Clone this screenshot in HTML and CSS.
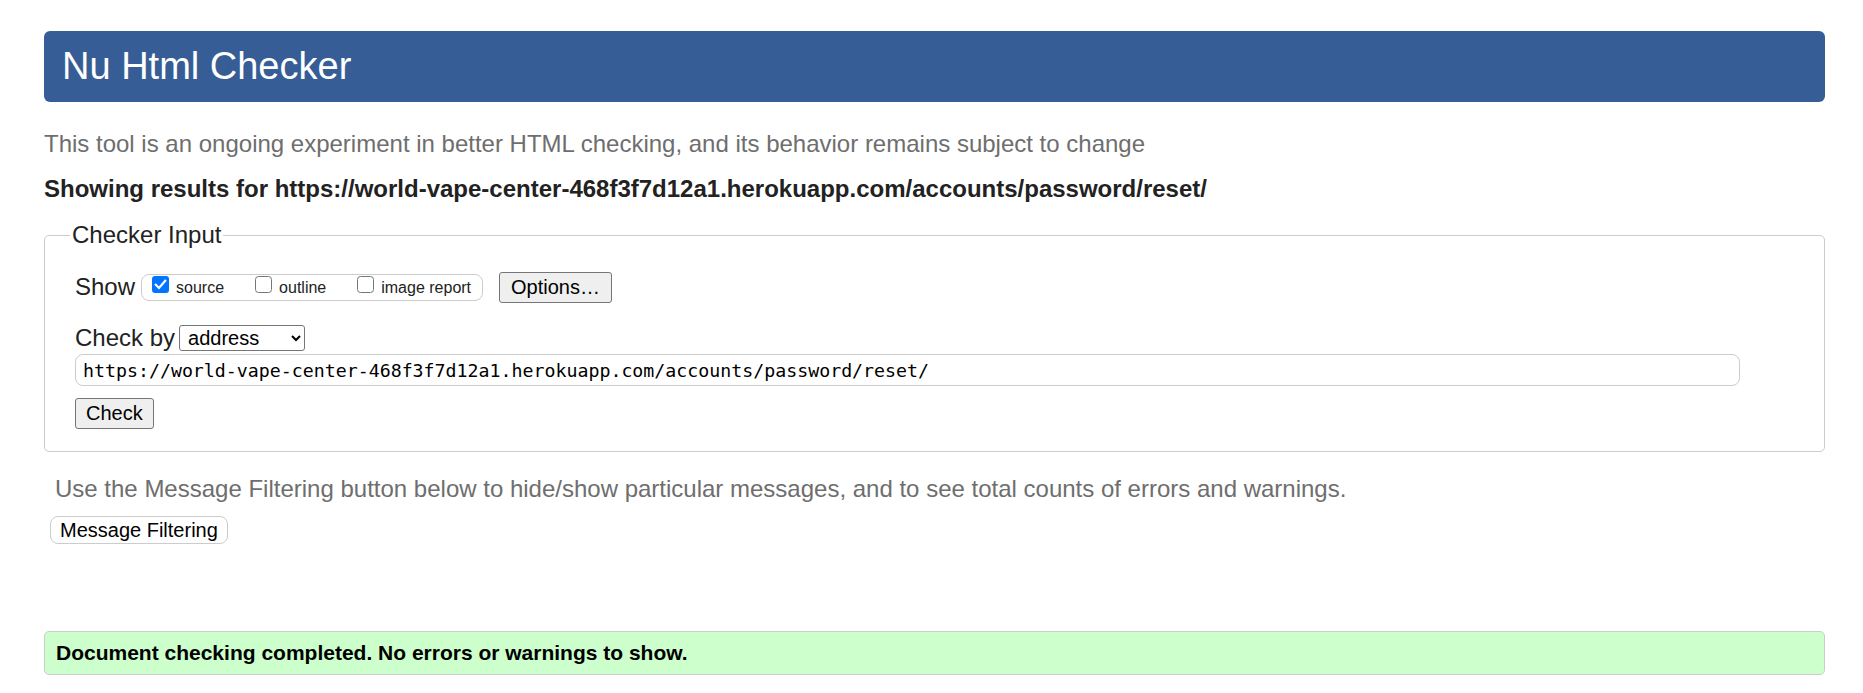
FILE: index.html
```html
<!DOCTYPE html>
<html lang="en">
<head>
<meta charset="utf-8">
<title>Nu Html Checker</title>
<link rel="stylesheet" href="styles.css">
</head>
<body>
<h1 class="title">Nu Html Checker</h1>
<p class="intro">This tool is an ongoing experiment in better HTML checking, and its behavior remains subject to change</p>
<p class="showing">Showing results for https://world-vape-center-468f3f7d12a1.herokuapp.com/accounts/password/reset/</p>
<form class="checker">
  <fieldset class="checker-input">
    <legend class="legend">Checker Input</legend>
    <div class="rows">
      <div class="row show-row">
        <span class="row-label">Show</span>
        <span class="options-box">
          <label class="opt"><span class="cb" role="checkbox" aria-checked="true"><svg width="17" height="17" viewBox="0 0 17 17"><rect x="0" y="0" width="17" height="17" rx="3" fill="#0075ff"/><path d="M3.8 8.8 L7 12 L13.2 4.8" fill="none" stroke="#ffffff" stroke-width="2.2" stroke-linecap="square"/></svg></span>source</label>
          <label class="opt"><span class="cb" role="checkbox" aria-checked="false"><svg width="17" height="17" viewBox="0 0 17 17"><rect x="0.5" y="0.5" width="16" height="16" rx="3" fill="#ffffff" stroke="#767676"/></svg></span>outline</label>
          <label class="opt"><span class="cb" role="checkbox" aria-checked="false"><svg width="17" height="17" viewBox="0 0 17 17"><rect x="0.5" y="0.5" width="16" height="16" rx="3" fill="#ffffff" stroke="#767676"/></svg></span>image report</label>
        </span>
        <button type="button" class="btn btn-options">Options…</button>
      </div>
      <div class="row by-row">
        <label class="row-label" for="docselect">Check by</label>
        <select id="docselect" class="select"><option>address</option><option>file upload</option><option>text input</option></select>
      </div>
      <input class="url" type="url" value="https://world-vape-center-468f3f7d12a1.herokuapp.com/accounts/password/reset/">
      <div class="submit-row"><button type="button" class="btn btn-check">Check</button></div>
    </div>
  </fieldset>
</form>
<p class="filter-note">Use the Message Filtering button below to hide/show particular messages, and to see total counts of errors and warnings.</p>
<button type="button" class="btn-filter">Message Filtering</button>
<div class="success">Document checking completed. No errors or warnings to show.</div>
</body>
</html>
```

FILE: styles.css
```css
html, body {
  background: #ffffff;
}

body {
  margin: 0;
  padding: 31px 38px 20px 44px;
  font-family: "Liberation Sans", Arial, sans-serif;
  color: #222222;
}

.title {
  margin: 0;
  height: 71px;
  padding: 0 18px;
  line-height: 71px;
  font-size: 38px;
  font-weight: normal;
  color: #ffffff;
  background: #365d95;
  border-radius: 6px;
}

.intro {
  margin: 28px 0 0;
  font-size: 24px;
  line-height: 28px;
  color: #6e6e6e;
}

.showing {
  margin: 17px 0 18px;
  font-size: 24px;
  line-height: 28px;
  font-weight: bold;
  color: #222222;
}

.checker {
  margin: 0;
}

.checker-input {
  margin: 0;
  min-width: 0;
  padding: 23px 25px 22px 25px;
  border: 1px solid #cccccc;
  border-radius: 5px;
}

.legend {
  padding: 0 2px;
  font-size: 24px;
  line-height: 28px;
  color: #222222;
}

.rows {
  padding-left: 5px;
  display: flex;
  flex-direction: column;
  align-items: flex-start;
}

.row {
  display: flex;
  align-items: center;
}

.show-row {
  height: 31px;
}

.by-row {
  margin-top: 21px;
  height: 28px;
}

.row-label {
  font-size: 24px;
  line-height: 28px;
  color: #222222;
}

.show-row .row-label {
  margin-right: 6px;
  margin-bottom: 2px;
}

.by-row .row-label {
  margin-right: 4px;
}

.options-box {
  display: flex;
  align-items: flex-start;
  gap: 31px;
  box-sizing: border-box;
  height: 27px;
  padding: 1px 11px 0 10px;
  border: 1px solid #cccccc;
  border-radius: 8px;
  margin-right: 16px;
}

.opt {
  display: flex;
  align-items: flex-start;
  font-size: 16px;
  line-height: 24px;
  color: #222222;
  white-space: nowrap;
}

.cb {
  display: block;
  width: 17px;
  height: 17px;
  margin-right: 7px;
}

.cb svg {
  display: block;
}

.btn {
  box-sizing: border-box;
  height: 31px;
  font-family: "Liberation Sans", Arial, sans-serif;
  font-size: 20px;
  color: #000000;
  background: #efefef;
  border: 1px solid #767676;
  border-radius: 3px;
}

.btn-options {
  padding: 0 11px;
}

.btn-check {
  padding: 0 10px;
}

.select {
  box-sizing: border-box;
  width: 126px;
  height: 26px;
  padding: 0 2px 0 4px;
  font-family: "Liberation Sans", Arial, sans-serif;
  font-size: 20px;
  color: #000000;
  background: #ffffff;
  border: 1px solid #767676;
  border-radius: 3px;
}

.url {
  box-sizing: border-box;
  margin: 2px 0 0;
  width: 1665px;
  height: 32px;
  padding: 0 7px;
  font-family: "DejaVu Sans Mono", "Liberation Mono", monospace;
  font-size: 18.25px;
  color: #000000;
  background: #ffffff;
  border: 1px solid #cccccc;
  border-radius: 8px;
}

.submit-row {
  margin-top: 12px;
}

.filter-note {
  margin: 23px 0 13px 11px;
  font-size: 24px;
  line-height: 28px;
  color: #6e6e6e;
}

.btn-filter {
  display: block;
  box-sizing: border-box;
  margin-left: 6px;
  height: 28px;
  padding: 0 9px;
  font-family: "Liberation Sans", Arial, sans-serif;
  font-size: 20px;
  color: #000000;
  background: #ffffff;
  border: 1px solid #cccccc;
  border-radius: 8px;
}

.success {
  margin-top: 87px;
  padding: 9px 11px;
  font-size: 21px;
  line-height: 24px;
  font-weight: bold;
  color: #000000;
  background: #ccffcc;
  border: 1px solid #cccccc;
  border-radius: 5px;
}
```
